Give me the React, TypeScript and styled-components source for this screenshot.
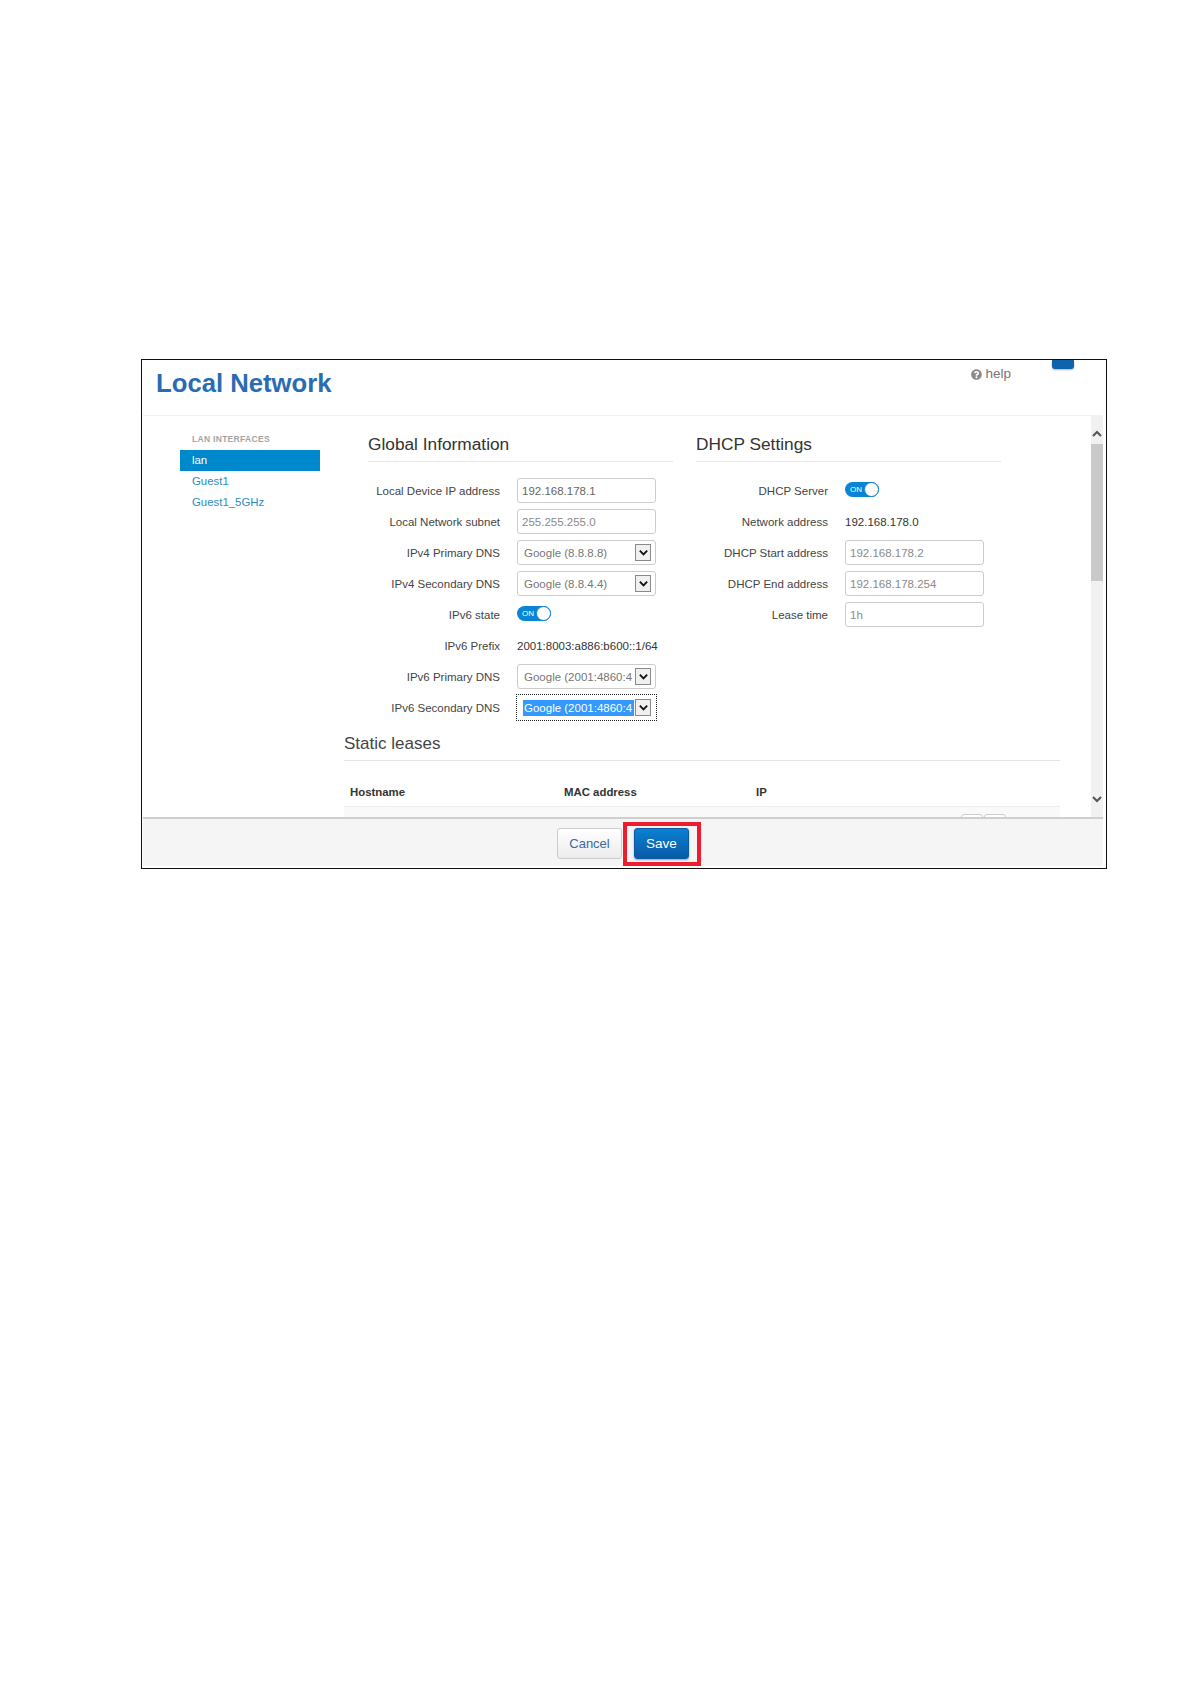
import styled, { createGlobalStyle } from "styled-components";
import { FaQuestionCircle } from "react-icons/fa";

const GlobalStyle = createGlobalStyle`
  html, body {
    margin: 0;
    background: #ffffff;
  }
  body {
    font-family: "Liberation Sans", Arial, sans-serif;
    font-size: 11.5px;
    color: #333333;
  }
`;

const Chevron = ({ up, size = 12 }: { up?: boolean; size?: number }) => (
  <svg width={size} height={size} viewBox="0 0 12 12" fill="none">
    <path
      d={up ? "M2 8 L6 4 L10 8" : "M2 4 L6 8 L10 4"}
      stroke="currentColor"
      strokeWidth="2"
    />
  </svg>
);

type FieldRow =
  | { label: string; kind: "input"; value: string; muted?: boolean }
  | { label: string; kind: "select"; value: string; focused?: boolean }
  | { label: string; kind: "toggle" }
  | { label: string; kind: "text"; value: string };

const globalRows: FieldRow[] = [
  { label: "Local Device IP address", kind: "input", value: "192.168.178.1" },
  { label: "Local Network subnet", kind: "input", value: "255.255.255.0", muted: true },
  { label: "IPv4 Primary DNS", kind: "select", value: "Google (8.8.8.8)" },
  { label: "IPv4 Secondary DNS", kind: "select", value: "Google (8.8.4.4)" },
  { label: "IPv6 state", kind: "toggle" },
  { label: "IPv6 Prefix", kind: "text", value: "2001:8003:a886:b600::1/64" },
  { label: "IPv6 Primary DNS", kind: "select", value: "Google (2001:4860:4" },
  { label: "IPv6 Secondary DNS", kind: "select", value: "Google (2001:4860:4", focused: true },
];

const dhcpRows: FieldRow[] = [
  { label: "DHCP Server", kind: "toggle" },
  { label: "Network address", kind: "text", value: "192.168.178.0" },
  { label: "DHCP Start address", kind: "input", value: "192.168.178.2", muted: true },
  { label: "DHCP End address", kind: "input", value: "192.168.178.254", muted: true },
  { label: "Lease time", kind: "input", value: "1h", muted: true },
];

const Control = ({ row }: { row: FieldRow }) => {
  if (row.kind === "input") return <TextInput readOnly value={row.value} $muted={row.muted} />;
  if (row.kind === "text") return <PlainValue>{row.value}</PlainValue>;
  if (row.kind === "toggle") {
    return (
      <Toggle>
        <ToggleText>ON</ToggleText>
        <ToggleKnob />
      </Toggle>
    );
  }
  return (
    <SelectBox $focused={row.focused}>
      <SelectText $focused={row.focused}>{row.value}</SelectText>
      <SelectArrow>
        <Chevron size={11} />
      </SelectArrow>
    </SelectBox>
  );
};

const App = () => {
  return (
    <Page>
      <GlobalStyle />
      <Frame>
        <Header>
          <Title>Local Network</Title>
          <HelpLink>
            <FaQuestionCircle size={11} color="#8a8a8a" />
            help
          </HelpLink>
          <TopTab />
        </Header>

        <Body>
          <Sidebar>
            <SidebarLabel>LAN INTERFACES</SidebarLabel>
            <SidebarItem $active>lan</SidebarItem>
            <SidebarItem>Guest1</SidebarItem>
            <SidebarItem>Guest1_5GHz</SidebarItem>
          </Sidebar>

          <Main>
            <Columns>
              <Column>
                <SectionTitle>Global Information</SectionTitle>
                <Rows>
                  {globalRows.map((row) => (
                    <Row key={row.label}>
                      <RowLabel>{row.label}</RowLabel>
                      <Control row={row} />
                    </Row>
                  ))}
                </Rows>
              </Column>
              <Column>
                <SectionTitle>DHCP Settings</SectionTitle>
                <Rows>
                  {dhcpRows.map((row) => (
                    <Row key={row.label}>
                      <RowLabel>{row.label}</RowLabel>
                      <Control row={row} />
                    </Row>
                  ))}
                </Rows>
              </Column>
            </Columns>

            <LeasesTitle>Static leases</LeasesTitle>
            <LeasesHead>
              <span>Hostname</span>
              <span>MAC address</span>
              <span>IP</span>
            </LeasesHead>
            <LeasesRow>
              <MiniButton />
              <MiniButton />
            </LeasesRow>
          </Main>

          <Scrollbar>
            <ScrollUp>
              <Chevron up />
            </ScrollUp>
            <ScrollThumb />
            <ScrollDown>
              <Chevron />
            </ScrollDown>
          </Scrollbar>
        </Body>

        <Footer>
          <CancelButton>Cancel</CancelButton>
          <SaveHighlight>
            <SaveButton>Save</SaveButton>
          </SaveHighlight>
        </Footer>
      </Frame>
    </Page>
  );
};

export default App;

const Page = styled.div`
  padding: 359px 0 0 141px;
  height: 1325px;
`;

const Frame = styled.div`
  box-sizing: border-box;
  width: 966px;
  height: 510px;
  border: 1px solid #111111;
  padding: 0 3px 2px 1px;
  display: flex;
  flex-direction: column;
`;

const Header = styled.div`
  box-sizing: border-box;
  height: 56px;
  flex: none;
  display: flex;
  align-items: flex-start;
  padding-left: 13px;
  border-bottom: 1px solid #f2f2f2;
`;

const Title = styled.h1`
  margin: 7px 0 0;
  font-size: 25.7px;
  line-height: 32px;
  font-weight: 700;
  color: #2a6cb2;
`;

const HelpLink = styled.div`
  margin-left: auto;
  margin-top: 6px;
  display: flex;
  align-items: center;
  gap: 3px;
  font-size: 13.5px;
  line-height: 16px;
  color: #777777;
`;

const TopTab = styled.div`
  width: 22px;
  height: 9px;
  margin: 0 29px 0 41px;
  background: #0f62ac;
  border-radius: 0 0 3px 3px;
  box-shadow: 0 1px 2px rgba(0, 0, 0, 0.3);
`;

const Body = styled.div`
  flex: 1;
  min-height: 0;
  display: flex;
  overflow: hidden;
`;

const Sidebar = styled.div`
  width: 140px;
  flex: none;
  margin-left: 37px;
  padding-top: 17px;
`;

const SidebarLabel = styled.div`
  height: 17px;
  padding-left: 12px;
  font-size: 8.5px;
  line-height: 12px;
  font-weight: 700;
  letter-spacing: 0.3px;
  color: #a5a5a5;
`;

const SidebarItem = styled.div<{ $active?: boolean }>`
  height: 21px;
  padding-left: 12px;
  font-size: 11.4px;
  line-height: 21px;
  color: ${(p) => (p.$active ? "#ffffff" : "#2b8dbf")};
  background: ${(p) => (p.$active ? "#0088cc" : "transparent")};
`;

const Main = styled.div`
  width: 716px;
  flex: none;
  margin-left: 24px;
`;

const Columns = styled.div`
  display: flex;
  gap: 23px;
  padding-left: 24px;
`;

const Column = styled.section`
  width: 305px;
  flex: none;
`;

const SectionTitle = styled.h2`
  margin: 0;
  padding: 18px 0 7px;
  font-size: 17.3px;
  line-height: 20px;
  font-weight: 400;
  color: #333333;
  border-bottom: 1px solid #e5e5e5;
`;

const Rows = styled.div`
  margin-top: 13px;
`;

const Row = styled.div`
  display: grid;
  grid-template-columns: 132px 139px;
  column-gap: 17px;
  align-items: center;
  height: 31px;
`;

const RowLabel = styled.label`
  text-align: right;
  color: #444444;
  font-size: 11.5px;
`;

const TextInput = styled.input<{ $muted?: boolean }>`
  box-sizing: border-box;
  width: 139px;
  height: 25px;
  padding: 0 4px;
  font-family: inherit;
  font-size: 11.5px;
  color: ${(p) => (p.$muted ? "#8a8a8a" : "#666666")};
  background: #ffffff;
  border: 1px solid #cccccc;
  border-radius: 3px;
  outline: none;
`;

const PlainValue = styled.div`
  color: #333333;
  white-space: nowrap;
`;

const Toggle = styled.div`
  box-sizing: border-box;
  width: 34px;
  height: 15px;
  margin-top: -2px;
  display: flex;
  align-items: center;
  justify-content: space-between;
  padding-left: 5px;
  background: #0a84d6;
  border-radius: 8px;
`;

const ToggleText = styled.span`
  font-size: 8px;
  line-height: 15px;
  color: #ffffff;
`;

const ToggleKnob = styled.span`
  box-sizing: border-box;
  width: 15px;
  height: 15px;
  background: #ffffff;
  border: 1px solid #0a84d6;
  border-radius: 50%;
`;

const SelectBox = styled.div<{ $focused?: boolean }>`
  box-sizing: border-box;
  width: 139px;
  height: 25px;
  display: flex;
  align-items: center;
  padding: 0 4px 0 5px;
  background: #ffffff;
  border: 1px solid #cccccc;
  border-radius: 3px;
  ${(p) =>
    p.$focused &&
    `
    border-color: transparent;
    border-radius: 0;
    outline: 1px dotted #222222;
    outline-offset: 0;
  `}
`;

const SelectText = styled.div<{ $focused?: boolean }>`
  flex: 1;
  min-width: 0;
  overflow: hidden;
  white-space: nowrap;
  line-height: 16px;
  margin-right: 1px;
  text-indent: 1px;
  color: ${(p) => (p.$focused ? "#ffffff" : "#777777")};
  background: ${(p) => (p.$focused ? "#3399ff" : "transparent")};
`;

const SelectArrow = styled.div`
  box-sizing: border-box;
  width: 16px;
  height: 17px;
  flex: none;
  display: flex;
  align-items: center;
  justify-content: center;
  color: #111111;
  background: #f0f0f0;
  border: 1px solid #8a8a8a;
`;

const LeasesTitle = styled.h2`
  margin: 0;
  padding: 11px 0 6px;
  font-size: 17px;
  line-height: 20px;
  font-weight: 400;
  color: #444444;
  border-bottom: 1px solid #e5e5e5;
`;

const LeasesHead = styled.div`
  display: grid;
  grid-template-columns: 214px 192px 1fr;
  padding: 22px 0 5px 6px;
  font-size: 11.4px;
  line-height: 18px;
  font-weight: 700;
  color: #333333;
  border-bottom: 1px solid #eeeeee;
`;

const LeasesRow = styled.div`
  display: flex;
  justify-content: flex-end;
  gap: 1px;
  height: 40px;
  padding: 7px 54px 0 0;
  background: #f9f9f9;
`;

const MiniButton = styled.div`
  box-sizing: border-box;
  width: 22px;
  height: 24px;
  background: #ffffff;
  border: 1px solid #cccccc;
  border-radius: 3px;
`;

const Scrollbar = styled.div`
  width: 12px;
  flex: none;
  margin-left: auto;
  display: flex;
  flex-direction: column;
  background: #f1f1f1;
`;

const ScrollUp = styled.div`
  height: 28px;
  flex: none;
  display: flex;
  align-items: flex-end;
  padding-bottom: 4px;
  box-sizing: border-box;
  color: #555555;
`;

const ScrollThumb = styled.div`
  height: 137px;
  flex: none;
  background: #c9c9c9;
`;

const ScrollDown = styled.div`
  margin-top: auto;
  height: 36px;
  flex: none;
  display: flex;
  align-items: center;
  color: #555555;
`;

const Footer = styled.div`
  flex: none;
  box-sizing: border-box;
  height: 49px;
  display: flex;
  justify-content: center;
  align-items: center;
  padding: 2px 0 0 12px;
  gap: 1px;
  background: #f5f5f5;
  border-top: 2px solid #cfcfcf;
`;

const CancelButton = styled.button`
  box-sizing: border-box;
  width: 65px;
  height: 31px;
  padding: 0;
  font-family: inherit;
  font-size: 13px;
  color: #3b6a9c;
  background: linear-gradient(#ffffff, #ececec);
  border: 1px solid #cccccc;
  border-radius: 3px;
`;

const SaveHighlight = styled.div`
  box-sizing: border-box;
  width: 78px;
  height: 44px;
  display: flex;
  align-items: center;
  justify-content: center;
  padding-right: 1px;
  border: 4px solid #ed1c2e;
`;

const SaveButton = styled.button`
  box-sizing: border-box;
  width: 55px;
  height: 31px;
  padding: 0;
  font-family: inherit;
  font-size: 13.5px;
  color: #ffffff;
  background: linear-gradient(#0a80d2, #0a5aa6);
  border: 1px solid #0a5aa6;
  border-radius: 3px;
  box-shadow: 0 1px 2px rgba(0, 0, 0, 0.35);
`;
